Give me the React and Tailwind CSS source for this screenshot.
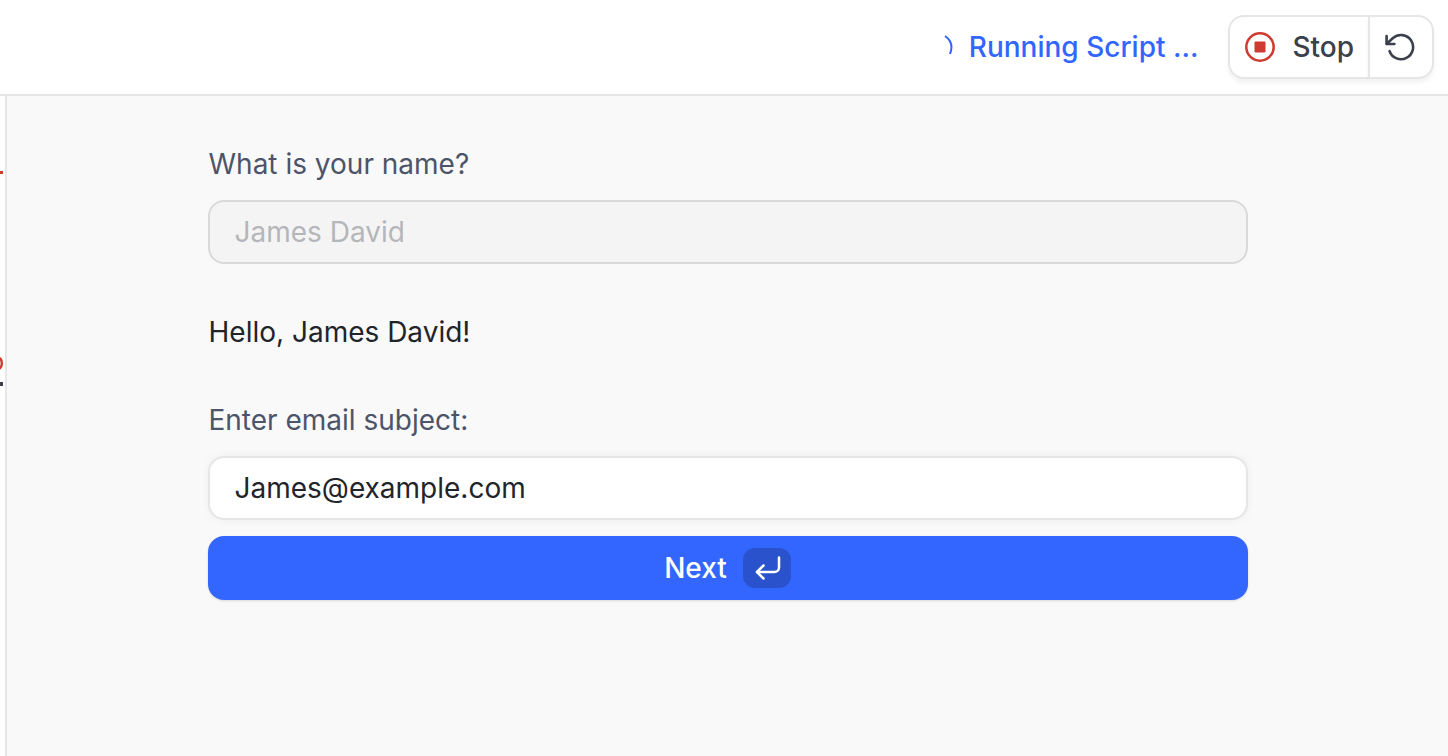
import { useState } from "react";

function Spinner() {
  return (
    <svg className="size-7" viewBox="0 0 28 28" fill="none" stroke="#3366ff" strokeWidth="2" aria-hidden="true">
      <path d="M20 3Q29.500 9.500 25 21" />
    </svg>
  );
}

function StopIcon() {
  return (
    <svg className="size-8" viewBox="0 0 32 32" fill="none" aria-hidden="true">
      <circle cx="16" cy="16" r="13.7" stroke="#cf3b30" strokeWidth="2.5" />
      <rect x="10.5" y="10.5" width="11" height="11" rx="1" fill="#cf3b30" />
    </svg>
  );
}

function RestartIcon() {
  return (
    <svg
      className="size-8"
      viewBox="0 0 32 32"
      fill="none"
      stroke="#3b404b"
      strokeWidth="2.6"
      strokeLinecap="round"
      strokeLinejoin="round"
      aria-hidden="true"
    >
      <path d="M1.6 5v8h7.800" />
      <path d="M1.800 12.800L8 7A12.100 12.100 0 1 1 4.600 20.200" />
    </svg>
  );
}

function EnterIcon() {
  return (
    <svg
      className="h-6 w-7"
      viewBox="0 0 28 24"
      fill="none"
      stroke="currentColor"
      strokeWidth="2.5"
      strokeLinecap="round"
      strokeLinejoin="round"
      aria-hidden="true"
    >
      <path d="M26 1.500v10a4.500 4.500 0 0 1-4.500 4.500H4" />
      <path d="M10.500 9.500L4 16l6.500 6.500" />
    </svg>
  );
}

export default function App() {
  const [subject, setSubject] = useState("James@example.com");

  return (
    <div className="flex min-h-screen flex-col bg-white font-['Inter',sans-serif] text-[28px] leading-10">
      <header className="flex h-24 items-center justify-end border-b-2 border-[#e6e6e6] px-3.5">
        <div className="mr-[30px] flex items-center gap-4 font-medium text-[#3366ff]" role="status">
          <Spinner />
          <span>Running Script ...</span>
        </div>
        <div className="flex h-16 font-medium text-[#3b404b]">
          <button className="flex items-center gap-4 rounded-l-2xl border-2 border-r-0 border-[#e6e6e6] bg-white px-3.5 shadow-[0_4px_4px_rgba(0,0,0,0.05)]">
            <StopIcon />
            Stop
          </button>
          <button
            aria-label="Restart"
            className="flex w-[66px] items-center justify-center rounded-r-2xl border-2 border-[#e6e6e6] bg-white shadow-[0_4px_4px_rgba(0,0,0,0.05)]"
          >
            <RestartIcon />
          </button>
        </div>
      </header>

      <div className="flex grow">
        {/* Edge of the editor pane */}
        <aside className="w-[7px] shrink-0 border-r-2 border-[#e6e6e6] bg-white pt-[75px]">
          <div className="h-[3px] w-[3px] bg-[#cf3b30]" />
          <svg className="mt-[182px] block h-4 w-1" viewBox="0 0 4 16" fill="none" aria-hidden="true">
            <path d="M-1 2Q1.800 3 1.800 7.500Q1.800 11-1 13" stroke="#cf3b30" strokeWidth="2.4" />
          </svg>
          <div className="mt-[10px] h-1 w-[3px] bg-[#3b404b]" />
        </aside>

        <main className="grow bg-[#f9f9f9] px-6 pt-12">
          <form className="mx-auto flex max-w-[1040px] flex-col" onSubmit={(e) => e.preventDefault()}>
            <label htmlFor="name" className="pl-px text-[#4d5469]">
              What is your name?
            </label>
            <input
              id="name"
              type="text"
              value="James David"
              disabled
              className="mt-4 h-16 rounded-2xl border-2 border-[#d9d9d9] bg-[#f4f4f4] px-[25px] text-[#b5b6b9]"
            />

            <p className="mt-12 pl-px text-[#22242a]">Hello, James David!</p>

            <label htmlFor="subject" className="mt-12 pl-px text-[#4d5469]">
              Enter email subject:
            </label>
            <input
              id="subject"
              type="text"
              value={subject}
              onChange={(e) => setSubject(e.target.value)}
              className="mt-4 h-16 rounded-2xl border-2 border-[#e6e6e6] bg-white px-[25px] text-[#22242a] shadow-[0_0_8px_rgba(0,0,0,0.05)] outline-none"
            />

            <button
              type="submit"
              className="mt-4 flex h-16 items-center justify-center gap-4 rounded-2xl bg-[#3366ff] font-medium text-white shadow-sm"
            >
              Next
              <span className="flex h-10 w-12 items-center justify-center rounded-xl bg-[#2952cc]">
                <EnterIcon />
              </span>
            </button>
          </form>
        </main>
      </div>
    </div>
  );
}
